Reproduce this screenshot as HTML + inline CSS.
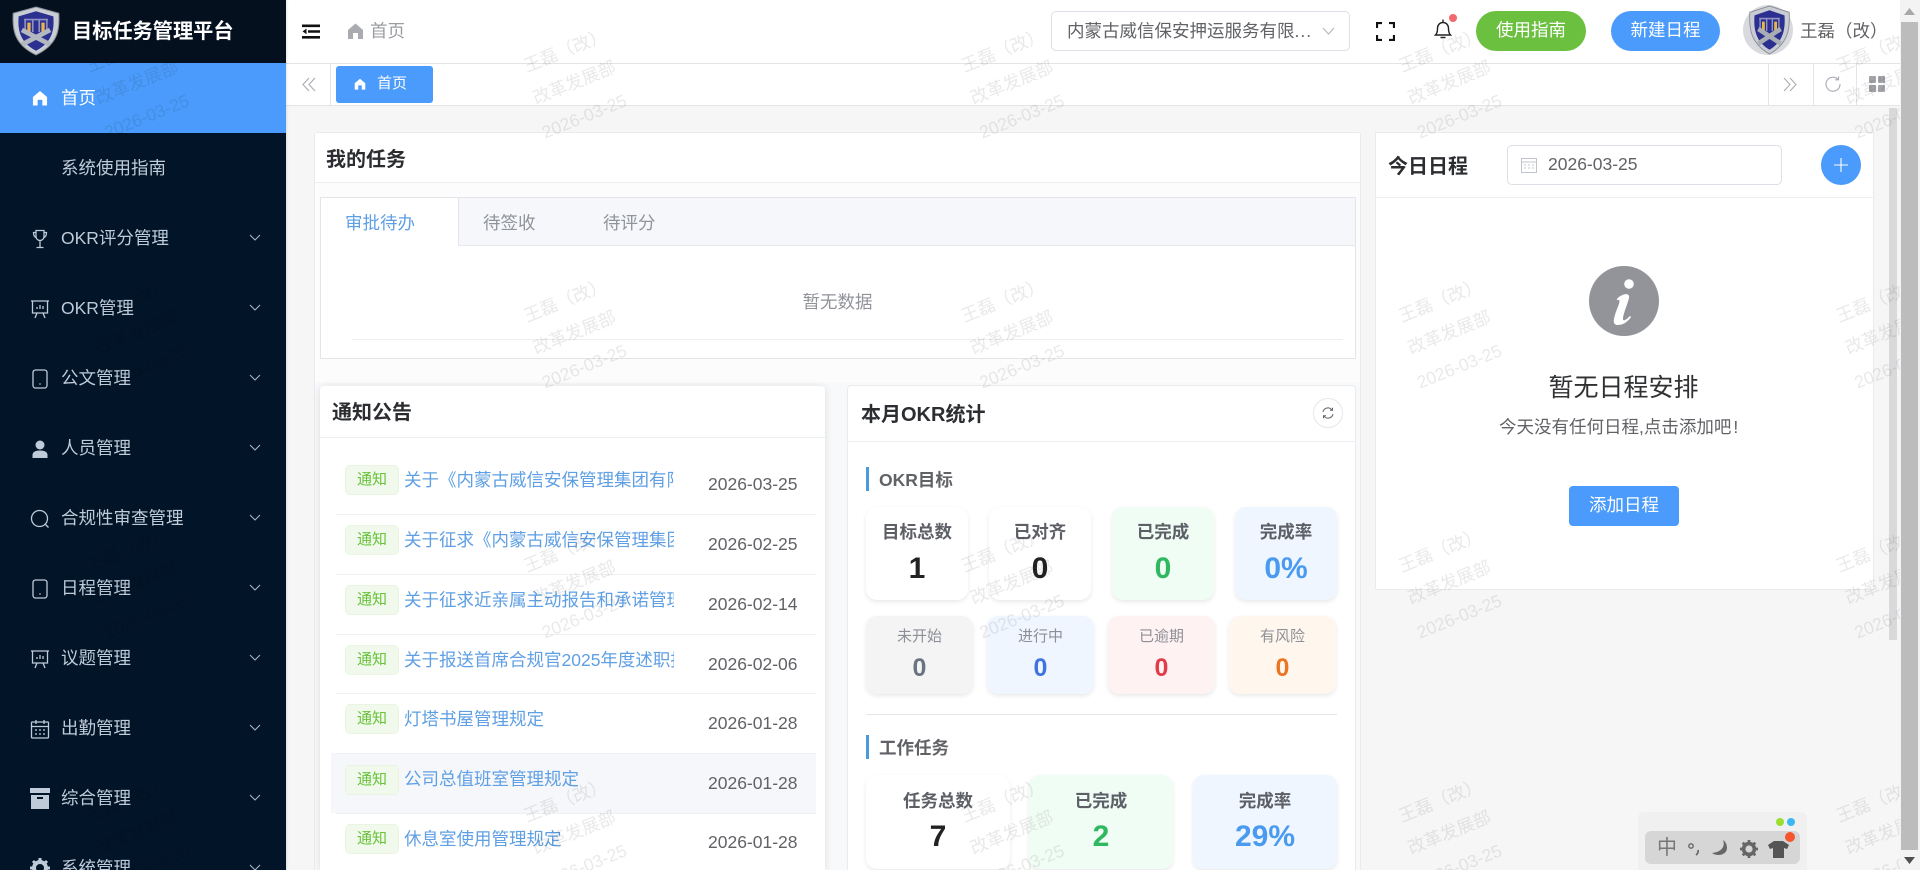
<!DOCTYPE html>
<html lang="zh"><head><meta charset="utf-8"><title>目标任务管理平台</title>
<style>
*{box-sizing:border-box;margin:0;padding:0}
html,body{width:1920px;height:870px;overflow:hidden;background:#f6f6f7;font-family:"Liberation Sans","Noto Sans CJK SC",sans-serif;color:#606266}
.a{position:absolute}
.t{position:absolute;white-space:nowrap;line-height:30px;height:30px;font-size:17.5px}
.c{text-align:center}
.b{font-weight:700}
#side{left:0;top:0;width:286px;height:870px;background:#011428;overflow:hidden;box-shadow:1px 0 2px rgba(0,0,0,.1)}
.mi{position:absolute;left:0;width:286px;height:70px;color:#bfcbd9}
.mi .l{position:absolute;left:61px;top:20px;line-height:30px;font-size:17.5px;white-space:nowrap}
.mi svg.i{position:absolute;left:30px;top:26px;width:20px;height:20px;fill:none;stroke:#bfcbd9;stroke-width:1.3}
.mi svg.ch{position:absolute;left:249px;top:30px;width:12px;height:10px;fill:none;stroke:#a9b6c6;stroke-width:1.1}
.card{position:absolute;background:#fff;border:1px solid #e9ebef}
.tag{position:absolute;left:345px;width:54px;height:30px;background:#f0f9eb;border:1px solid #e9f5e1;border-radius:5px;color:#67c23a;font-size:15px;line-height:28px;text-align:center}
.lnk{position:absolute;left:404px;width:270px;overflow:hidden;white-space:nowrap;font-size:17.5px;line-height:30px;height:30px;color:#5f9fe3}
.dt{position:absolute;left:708px;font-size:17.5px;line-height:30px;height:30px;color:#606266;white-space:nowrap}
.sep{position:absolute;left:336px;width:480px;height:1px;background:#eef0f3}
.st{position:absolute;border-radius:11px;box-shadow:0 2px 5px rgba(0,0,0,.09);background:#fff}
.st .h{position:absolute;left:0;right:0;text-align:center;font-weight:500;white-space:nowrap}
.st .n{position:absolute;left:0;right:0;text-align:center;font-weight:700;font-family:"Liberation Sans",sans-serif}
.r1{top:507px;width:102px;height:93px}
.r1 .h{top:10px;line-height:30px;font-size:17.5px;color:#5c5f66;font-weight:700}
.r1 .n{top:44px;line-height:36px;font-size:30px}
.r2{top:616px;width:107px;height:78px}
.r2 .h{top:7px;line-height:28px;font-size:15px;color:#8d9096;font-weight:400}
.r2 .n{top:36px;line-height:32px;font-size:25px}
.r3{top:775px;width:144px;height:94px}
.r3 .h{top:11px;line-height:30px;font-size:17.5px;color:#5c5f66;font-weight:700}
.r3 .n{top:43px;line-height:38px;font-size:30px}
.gr{background:#f0fdf4}.bl{background:#eff6ff}
.vl{position:absolute;top:64px;width:1px;height:41px;background:#e3e5e9}
</style></head><body>

<!-- main header -->
<div class="a" style="left:286px;top:0;width:1614px;height:63px;background:#fff"></div>
<div class="a" style="left:286px;top:63px;width:1614px;height:43px;background:#fff;border-top:1px solid #e2e4e8;border-bottom:1px solid #e2e4e8"></div>

<!-- hamburger -->
<svg class="a" style="left:302px;top:24px" width="18" height="15" viewBox="0 0 18 15"><path d="M0 0.5h18v2.6H0zM0 12h18v2.6H0zM6 6.200h12v2.600H6z" fill="#111"/><path d="M4.500 4.600v5.600L0.500 7.400z" fill="#111"/></svg>
<svg class="a" style="left:347px;top:23px" width="17" height="16" viewBox="0 0 17 16"><path d="M8.500 0.500 16 7v9h-5V10H6v6H1V7z" fill="#a9abb0"/></svg>
<div class="t" style="left:370px;top:16px;color:#9a9ca1">首页</div>

<!-- select -->
<div class="a" style="left:1051px;top:11px;width:299px;height:40px;border:1px solid #dcdfe6;border-radius:5px;background:#fff"></div>
<div class="t" style="left:1067px;top:16px;color:#606266">内蒙古威信保安押运服务有限<span style="letter-spacing:1px">...</span></div>
<svg class="a" style="left:1322px;top:27px" width="13" height="9" viewBox="0 0 13 9"><path d="M1 1l5.500 6L12 1" fill="none" stroke="#b4b7bd" stroke-width="1.100"/></svg>
<!-- fullscreen -->
<svg class="a" style="left:1376px;top:22px" width="19" height="19" viewBox="0 0 19 19"><path d="M1 6V1h5M13 1h5v5M18 13v5h-5M6 18H1v-5" fill="none" stroke="#111" stroke-width="2.200"/></svg>
<!-- bell -->
<svg class="a" style="left:1432px;top:18px" width="22" height="22" viewBox="0 0 22 22"><path d="M3.500 17c1.700-1.600 2-3.500 2-6.500 0-3.300 2.100-6 5.500-6s5.500 2.700 5.500 6c0 3 .3 4.900 2 6.500zM11 1.500v3M8.500 19.500h5" fill="none" stroke="#222" stroke-width="1.400"/></svg>
<div class="a" style="left:1449px;top:14px;width:8px;height:8px;border-radius:50%;background:#f0696c"></div>
<div class="a c" style="left:1476px;top:11px;width:110px;height:40px;border-radius:20px;background:#6cc03f;color:#fff;font-size:17.5px;line-height:38px">使用指南</div>
<div class="a c" style="left:1611px;top:11px;width:109px;height:40px;border-radius:20px;background:#4a9bfb;color:#fff;font-size:17.5px;line-height:38px">新建日程</div>
<!-- avatar -->
<div class="a" style="left:1743px;top:5px;width:50px;height:50px;border-radius:50%;background:#d8dade"></div>
<svg class="a" style="left:1747px;top:5px" width="45" height="50" viewBox="0 0 48 48" preserveAspectRatio="none"><path d="M24 1 45 7c1 16-1 30-21 40C4 37 2 23 3 7z" fill="#c9ccd3" stroke="#8b8f98"/><path d="M24 5 40 10c1 13-1 25-16 33C9 35 7 23 8 10z" fill="#2b2f8f"/><path d="M13 13h22M14 13v11M21 13v12M27 13v12M34 13v11" stroke="#8f93c4" stroke-width="1.500" fill="none"/><path d="M17.500 16v10M30.500 16v10" stroke="#e9b649" stroke-width="3"/><path d="M12 37 36 23M36 37 12 23" stroke="#a9adb5" stroke-width="4.500"/></svg>
<div class="t" style="left:1800px;top:16px;color:#606266">王磊（改）</div>

<!-- tab bar -->
<div class="vl" style="left:330px"></div>
<svg class="a" style="left:302px;top:77px" width="14" height="15" viewBox="0 0 14 15"><path d="M7 1 1 7.500 7 14M13 1 7 7.500 13 14" fill="none" stroke="#a8abb2" stroke-width="1.100"/></svg>
<div class="a" style="left:336px;top:66px;width:97px;height:37px;background:#4a9bfb;border-radius:3px"></div>
<svg class="a" style="left:354px;top:78px" width="12" height="12" viewBox="0 0 17 16"><path d="M8.500 0.500 16 7v9h-5V10H6v6H1V7z" fill="#fff"/></svg>
<div class="t" style="left:377px;top:69px;color:#fff;font-size:15px">首页</div>
<div class="vl" style="left:1768px"></div><div class="vl" style="left:1813px"></div><div class="vl" style="left:1856px"></div>
<svg class="a" style="left:1783px;top:77px" width="14" height="15" viewBox="0 0 14 15"><path d="M1 1l6 6.500L1 14M7 1l6 6.500L7 14" fill="none" stroke="#a8abb2" stroke-width="1.100"/></svg>
<svg class="a" style="left:1825px;top:76px" width="16" height="16" viewBox="0 0 16 16"><path d="M13 3.300A7 7 0 1 0 15 8M13.500 0.500v3.300h-3.300" fill="none" stroke="#a8abb2" stroke-width="1.100"/></svg>
<svg class="a" style="left:1869px;top:76px" width="16" height="16" viewBox="0 0 16 16"><rect x="0" y="0" width="7" height="7" rx="1" fill="#a2a4a9"/><rect x="9" y="0" width="7" height="7" rx="1" fill="#a2a4a9"/><rect x="0" y="9" width="7" height="7" rx="1" fill="#a2a4a9"/><rect x="9" y="9" width="7" height="7" rx="1" fill="#a2a4a9"/></svg>

<!-- my tasks -->
<div class="card" style="left:314px;top:132px;width:1047px;height:738px;border-bottom:0;border-radius:3px 3px 0 0;background:#f8f9fa"></div>
<div class="a" style="left:315px;top:133px;width:1045px;height:50px;background:#fff;border-bottom:1px solid #eceef1"></div>
<div class="a" style="left:315px;top:183px;width:1045px;height:200px;background:#fcfcfd"></div>
<div class="t b" style="left:326px;top:145px;font-size:20px;color:#2b2d30">我的任务</div>
<div class="a" style="left:320px;top:197px;width:1036px;height:162px;border:1px solid #e3e5e9;background:#fff"></div>
<div class="a" style="left:458px;top:198px;width:897px;height:48px;background:#f5f7fa;border-bottom:1px solid #e6e8ec;border-left:1px solid #e3e5e9"></div>
<div class="t" style="left:345px;top:208px;color:#5e9fe3">审批待办</div>
<div class="t" style="left:483px;top:208px;color:#909399">待签收</div>
<div class="t" style="left:603px;top:208px;color:#909399">待评分</div>
<div class="t c" style="left:320px;width:1035px;top:287px;color:#909399">暂无数据</div>
<div class="a" style="left:352px;top:339px;width:991px;height:1px;background:#eceef1"></div>

<!-- notices -->
<div class="a" style="left:320px;top:386px;width:505px;height:484px;background:#fff;border-radius:4px 4px 0 0;box-shadow:0 1px 8px rgba(0,0,0,.12)"></div>
<div class="t b" style="left:332px;top:398px;font-size:20px;color:#2b2d30">通知公告</div>
<div class="a" style="left:320px;top:437px;width:505px;height:1px;background:#eceef1"></div>
<div class="a" style="left:331px;top:753px;width:485px;height:60px;background:#f5f7fa"></div>
<div class="sep" style="top:514px"></div><div class="sep" style="top:574px"></div><div class="sep" style="top:634px"></div><div class="sep" style="top:693px"></div><div class="sep" style="top:753px"></div><div class="sep" style="top:813px"></div>

<div class="tag" style="top:465px">通知</div><div class="lnk" style="top:465px">关于《内蒙古威信安保管理集团有限公司》</div><div class="dt" style="top:469px">2026-03-25</div>
<div class="tag" style="top:525px">通知</div><div class="lnk" style="top:525px">关于征求《内蒙古威信安保管理集团意见》</div><div class="dt" style="top:529px">2026-02-25</div>
<div class="tag" style="top:585px">通知</div><div class="lnk" style="top:585px">关于征求近亲属主动报告和承诺管理办法</div><div class="dt" style="top:589px">2026-02-14</div>
<div class="tag" style="top:645px">通知</div><div class="lnk" style="top:645px">关于报送首席合规官2025年度述职报告</div><div class="dt" style="top:649px">2026-02-06</div>
<div class="tag" style="top:704px">通知</div><div class="lnk" style="top:704px">灯塔书屋管理规定</div><div class="dt" style="top:708px">2026-01-28</div>
<div class="tag" style="top:765px">通知</div><div class="lnk" style="top:764px">公司总值班室管理规定</div><div class="dt" style="top:768px">2026-01-28</div>
<div class="tag" style="top:824px">通知</div><div class="lnk" style="top:824px">休息室使用管理规定</div><div class="dt" style="top:827px">2026-01-28</div>

<!-- OKR -->
<div class="a" style="left:847px;top:385px;width:509px;height:485px;background:#fff;border:1px solid #e9ebef;border-bottom:0;border-radius:4px 4px 0 0"></div>
<div class="t b" style="left:861px;top:400px;font-size:20px;color:#2b2d30">本月OKR统计</div>
<div class="a" style="left:847px;top:441px;width:509px;height:1px;background:#eceef1"></div>
<div class="a" style="left:1313px;top:398px;width:30px;height:30px;border-radius:50%;border:1px solid #e4e7ed"></div>
<svg class="a" style="left:1322px;top:407px" width="12" height="12" viewBox="0 0 12 12"><path d="M1 5A5 5 0 0 1 10 3M11 7A5 5 0 0 1 2 9M10.500 0.800V3.200H8M1.500 11.200V8.800H4" fill="none" stroke="#606266" stroke-width="1"/></svg>

<div class="a" style="left:866px;top:467px;width:3px;height:24px;background:#4a9bdb"></div>
<div class="t b" style="left:879px;top:465px;color:#606266">OKR目标</div>

<div class="st r1" style="left:866px"><div class="h">目标总数</div><div class="n" style="color:#222">1</div></div>
<div class="st r1" style="left:989px"><div class="h">已对齐</div><div class="n" style="color:#222">0</div></div>
<div class="st r1 gr" style="left:1112px"><div class="h">已完成</div><div class="n" style="color:#2fb85f">0</div></div>
<div class="st r1 bl" style="left:1235px"><div class="h">完成率</div><div class="n" style="color:#4a9bf0">0%</div></div>

<div class="st r2" style="left:866px;background:#f4f4f5"><div class="h">未开始</div><div class="n" style="color:#6b7280">0</div></div>
<div class="st r2 bl" style="left:987px"><div class="h">进行中</div><div class="n" style="color:#3f73e0">0</div></div>
<div class="st r2" style="left:1108px;background:#fef2f2"><div class="h">已逾期</div><div class="n" style="color:#e23c48">0</div></div>
<div class="st r2" style="left:1229px;background:#fff7ed"><div class="h">有风险</div><div class="n" style="color:#ea7524">0</div></div>

<div class="a" style="left:866px;top:714px;width:471px;height:1px;background:#e4e6ea"></div>
<div class="a" style="left:866px;top:735px;width:3px;height:24px;background:#4a9bdb"></div>
<div class="t b" style="left:879px;top:733px;color:#606266">工作任务</div>

<div class="st r3" style="left:866px"><div class="h">任务总数</div><div class="n" style="color:#222">7</div></div>
<div class="st r3 gr" style="left:1029px"><div class="h">已完成</div><div class="n" style="color:#2fb85f">2</div></div>
<div class="st r3 bl" style="left:1193px"><div class="h">完成率</div><div class="n" style="color:#4a9bf0">29%</div></div>

<!-- calendar -->
<div class="a" style="left:1375px;top:132px;width:499px;height:458px;background:#fff;border:1px solid #e9ebef"></div>
<div class="a" style="left:1375px;top:197px;width:499px;height:1px;background:#eceef1"></div>
<div class="t b" style="left:1388px;top:152px;font-size:20px;color:#2b2d30">今日日程</div>
<div class="a" style="left:1507px;top:145px;width:275px;height:40px;border:1px solid #dcdfe6;border-radius:5px;background:#fff"></div>
<svg class="a" style="left:1521px;top:157px" width="16" height="16" viewBox="0 0 16 16"><path d="M.5 1.500h15v14H.5zM.5 5h15" fill="none" stroke="#c0c4cc"/><path d="M3 8h2M7 8h2M11 8h2M3 11h2M7 11h2M11 11h2" stroke="#c0c4cc"/></svg>
<div class="t" style="left:1548px;top:149px;color:#606266">2026-03-25</div>
<div class="a" style="left:1821px;top:145px;width:40px;height:40px;border-radius:50%;background:#4a9bfb"></div>
<svg class="a" style="left:1833px;top:157px" width="16" height="16" viewBox="0 0 16 16"><path d="M8 1v14M1 8h14" stroke="#fff" stroke-width="1.100"/></svg>
<svg class="a" style="left:1589px;top:266px" width="70" height="70" viewBox="0 0 70 70"><circle cx="35" cy="35" r="35" fill="#939499"/><circle cx="40" cy="18" r="4.800" fill="#fff"/><path d="M28 33c3-4 11-7 12-3 1 3-6 17-6 23 0 2 2 2 7-3l1 1c-4 6-9 8-13 8-5 0-5-4-3-10 2-7 6-14 4-15-1-.5-3 1-2 0z" fill="#fff"/></svg>
<div class="t c" style="left:1374px;width:499px;top:373px;font-size:25px;color:#303133">暂无日程安排</div>
<div class="t" style="left:1499px;top:412px;color:#606266">今天没有任何日程,点击添加吧<span style="margin-left:2px">!</span></div>
<div class="a c" style="left:1569px;top:486px;width:110px;height:40px;background:#4a9bfb;border-radius:4px;color:#fff;font-size:17.5px;line-height:38px">添加日程</div>

<!-- sidebar -->
<div id="side" class="a">
<div class="a" style="left:0;top:0;width:286px;height:63px;background:#05101f"></div>
<svg class="a" style="left:10px;top:6px" width="52" height="50" viewBox="0 0 48 48" preserveAspectRatio="none"><path d="M24 1 45 7c1 16-1 30-21 40C4 37 2 23 3 7z" fill="#c9cdd4" stroke="#8b8f98"/><path d="M24 5 40 10c1 13-1 25-16 33C9 35 7 23 8 10z" fill="#2c3190"/><path d="M13 13h22M14 13v11M21 13v12M27 13v12M34 13v11" stroke="#8f93c4" stroke-width="1.500" fill="none"/><path d="M17.500 16v10M30.500 16v10" stroke="#eab64a" stroke-width="3"/><path d="M11 37 37 23M37 37 11 23" stroke="#b3b7bf" stroke-width="4.500"/></svg>
<div class="t b" style="left:72px;top:17px;font-size:20.200px;color:#fff">目标任务管理平台</div>
<div class="mi" style="top:63px;background:#4a9bfb;color:#fff"><svg class="a" style="left:32px;top:27px" width="16" height="16" viewBox="0 0 17 16"><path d="M8.500 0.500 16 7v9h-5V10H6v6H1V7z" fill="#fff"/></svg><span class="l">首页</span></div>
<div class="mi" style="top:133px"><span class="l">系统使用指南</span></div>
<div class="mi" style="top:203px"><svg class="i" viewBox="0 0 20 20"><path d="M6 1.500h8v6a4 4 0 0 1-8 0zM10 11.500v7M6.500 18.500h7M6 3.500H3.500c0 3 1 4.500 2.700 5M14 3.500h2.500c0 3-1 4.500-2.700 5"/></svg><span class="l">OKR评分管理</span><svg class="ch" viewBox="0 0 12 10"><path d="M1 2l5 5 5-5"/></svg></div>
<div class="mi" style="top:273px"><svg class="i" viewBox="0 0 20 20"><path d="M1 2h18M2.500 2v12h15V2M7 14l-2 5M13 14l2 5M7 10V8M10 10V6M13 10V7"/></svg><span class="l">OKR管理</span><svg class="ch" viewBox="0 0 12 10"><path d="M1 2l5 5 5-5"/></svg></div>
<div class="mi" style="top:343px"><svg class="i" viewBox="0 0 20 20"><rect x="3" y="1" width="14" height="18" rx="2.500"/><path d="M9.300 15h1.400"/></svg><span class="l">公文管理</span><svg class="ch" viewBox="0 0 12 10"><path d="M1 2l5 5 5-5"/></svg></div>
<div class="mi" style="top:413px"><svg class="a" style="left:30px;top:26px" width="20" height="20" viewBox="0 0 20 20"><circle cx="10" cy="6" r="4.500" fill="#bfcbd9"/><path d="M2.500 19v-3c0-3 3-4.500 7.500-4.500s7.500 1.500 7.500 4.500v3z" fill="#bfcbd9"/></svg><span class="l">人员管理</span><svg class="ch" viewBox="0 0 12 10"><path d="M1 2l5 5 5-5"/></svg></div>
<div class="mi" style="top:483px"><svg class="i" viewBox="0 0 20 20"><circle cx="9.500" cy="9.500" r="8"/><path d="M15.500 15.500l3 3"/></svg><span class="l">合规性审查管理</span><svg class="ch" viewBox="0 0 12 10"><path d="M1 2l5 5 5-5"/></svg></div>
<div class="mi" style="top:553px"><svg class="i" viewBox="0 0 20 20"><rect x="3" y="1" width="14" height="18" rx="2.500"/><path d="M9.300 15h1.400"/></svg><span class="l">日程管理</span><svg class="ch" viewBox="0 0 12 10"><path d="M1 2l5 5 5-5"/></svg></div>
<div class="mi" style="top:623px"><svg class="i" viewBox="0 0 20 20"><path d="M1 2h18M2.500 2v12h15V2M7 14l-2 5M13 14l2 5M7 10V8M10 10V6M13 10V7"/></svg><span class="l">议题管理</span><svg class="ch" viewBox="0 0 12 10"><path d="M1 2l5 5 5-5"/></svg></div>
<div class="mi" style="top:693px"><svg class="i" viewBox="0 0 20 20"><rect x="1.500" y="3" width="17" height="16" rx="1"/><path d="M1.500 7.500h17M6 1v4M14 1v4M5 11h2M9 11h2M13 11h2M5 15h2M9 15h2M13 15h2"/></svg><span class="l">出勤管理</span><svg class="ch" viewBox="0 0 12 10"><path d="M1 2l5 5 5-5"/></svg></div>
<div class="mi" style="top:763px"><svg class="a" style="left:30px;top:25px" width="20" height="21" viewBox="0 0 20 21"><rect x="0" y="0" width="20" height="5" fill="#bfcbd9"/><path d="M1 7h18v14H1z" fill="#bfcbd9"/><rect x="7" y="9" width="6" height="2" fill="#011428"/></svg><span class="l">综合管理</span><svg class="ch" viewBox="0 0 12 10"><path d="M1 2l5 5 5-5"/></svg></div>
<div class="mi" style="top:833px"><svg class="a" style="left:30px;top:25px" width="20" height="20" viewBox="0 0 20 20"><circle cx="10" cy="10" r="6" fill="none" stroke="#bfcbd9" stroke-width="4"/><path d="M10 0v4M10 16v4M0 10h4M16 10h4M3 3l3 3M14 14l3 3M17 3l-3 3M3 17l3-3" stroke="#bfcbd9" stroke-width="3"/></svg><span class="l">系统管理</span><svg class="ch" viewBox="0 0 12 10"><path d="M1 2l5 5 5-5"/></svg></div>
</div>

<!-- inner scrollbar -->
<div class="a" style="left:1889px;top:108px;width:8px;height:532px;background:#d9d9db"></div>
<!-- page scrollbar -->
<div class="a" style="left:1900px;top:0;width:20px;height:870px;background:#f3f3f4"></div>
<div class="a" style="left:1901px;top:22px;width:17px;height:828px;background:#bcbcbc"></div>
<svg class="a" style="left:1904px;top:8px" width="11" height="7" viewBox="0 0 11 7"><path d="M5.500 0 11 7H0z" fill="#a8a8a8"/></svg>
<svg class="a" style="left:1904px;top:857px" width="11" height="7" viewBox="0 0 11 7"><path d="M5.500 7 11 0H0z" fill="#505050"/></svg>

<!-- IME widget -->
<div class="a" style="left:1638px;top:812px;width:169px;height:58px;background:#f0f0f1;border-radius:6px 6px 0 0"></div>
<div class="a" style="left:1645px;top:831px;width:155px;height:33px;background:#d6d6d7;border-radius:6px"></div>
<div class="a" style="left:1776px;top:818px;width:8px;height:8px;border-radius:50%;background:#9ade32"></div>
<div class="a" style="left:1787px;top:818px;width:8px;height:8px;border-radius:50%;background:#3cb8f0"></div>
<div class="a" style="left:1785px;top:832px;width:10px;height:10px;border-radius:50%;background:#f4552f"></div>
<div class="t c" style="left:1654px;top:833px;width:26px;font-size:20px;color:#777">中</div>
<svg class="a" style="left:1687px;top:841px" width="14" height="16" viewBox="0 0 14 16"><circle cx="4" cy="5" r="2.200" fill="none" stroke="#666" stroke-width="1.400"/><path d="M11 9c.5 2-.5 4-2 5" fill="none" stroke="#666" stroke-width="1.800"/></svg>
<svg class="a" style="left:1711px;top:839px" width="18" height="18" viewBox="0 0 18 18"><path d="M12 1c2.500 6-1 12-11 13 5 4 15 2 15-5 0-4-2-7-4-8z" fill="#666"/></svg>
<svg class="a" style="left:1740px;top:840px" width="18" height="18" viewBox="0 0 20 20"><circle cx="10" cy="10" r="6" fill="none" stroke="#666" stroke-width="4"/><path d="M10 0v4M10 16v4M0 10h4M16 10h4M3 3l3 3M14 14l3 3M17 3l-3 3M3 17l3-3" stroke="#666" stroke-width="3"/></svg>
<svg class="a" style="left:1768px;top:841px" width="21" height="17" viewBox="0 0 21 17"><path d="M6 0h9l6 4-2 4-3-1v10H5V7L2 8 0 4z" fill="#555"/></svg>

<!-- watermark -->
<svg class="a" style="left:0;top:0;pointer-events:none" width="1900" height="870">
<defs><pattern id="w" patternUnits="userSpaceOnUse" width="437.5" height="250">
<g fill="#000" fill-opacity=".085" font-size="17.5" font-family="'Liberation Sans','Noto Sans CJK SC',sans-serif" text-anchor="middle">
<text transform="translate(130 56) rotate(-22)">王磊（改）</text>
<text transform="translate(139 88) rotate(-22)">改革发展部</text>
<text transform="translate(149 122) rotate(-22)">2026-03-25</text>
</g></pattern></defs>
<rect width="1900" height="870" fill="url(#w)"/>
</svg>
</body></html>
